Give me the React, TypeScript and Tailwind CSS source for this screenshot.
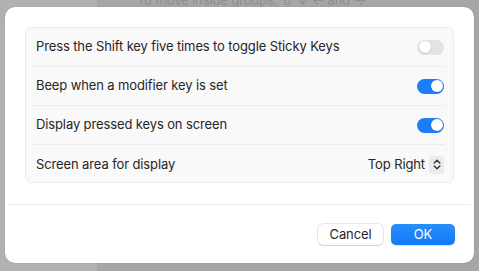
import React from 'react';

function Toggle({ on }: { on: boolean }) {
  return (
    <div
      className={`flex h-[15px] w-[27px] items-center rounded-full p-[1.5px] ${
        on ? 'justify-end bg-[#1a7ef8]' : 'justify-start bg-[#e3e3e3]'
      }`}
    >
      <div className="h-[12px] w-[12px] rounded-full bg-white shadow-[0_0.5px_1px_rgba(0,0,0,0.25)]" />
    </div>
  );
}

function Row({ label, children, last }: { label: string; children: React.ReactNode; last?: boolean }) {
  return (
    <div className="px-[8px]">
      <div className={`flex h-[39px] items-center justify-between pl-[2px] pr-[1px] ${last ? '' : 'border-b border-[#ececec]'}`}>
        <span>{label}</span>
        {children}
      </div>
    </div>
  );
}

export default function App() {
  return (
    <div
      className="relative h-[271px] w-[479px] overflow-hidden bg-[#a6a6a6] text-[13px] tracking-[-0.12px] text-[#262626]"
      style={{ fontFamily: 'Inter, "Noto Sans", sans-serif' }}
    >
      {/* dimmed window behind the sheet */}
      <div className="absolute left-0 top-0 h-full w-[97px] bg-[#b1b1b1]" />
      <div className="absolute left-[137px] top-[-9px] text-[13px] text-[#8e8e8e]">To move inside groups: ⇧ ↓ ← and →</div>

      <div className="relative ml-[5px] mt-[7px] flex h-[256px] w-[469px] flex-col rounded-[10px] bg-white shadow-[0_0_1px_rgba(0,0,0,0.3)]">
        <div className="mx-[20px] mt-[20px] h-[156px] rounded-[6px] border border-[#ececec] bg-[#f9f9f9]">
          <Row label="Press the Shift key five times to toggle Sticky Keys">
            <Toggle on={false} />
          </Row>
          <Row label="Beep when a modifier key is set">
            <Toggle on />
          </Row>
          <Row label="Display pressed keys on screen">
            <Toggle on />
          </Row>
          <Row label="Screen area for display" last>
            <div className="flex items-center gap-[4px]">
              <span>Top Right</span>
              <div className="flex h-[18px] w-[15px] items-center justify-center rounded-[4px] bg-[#ebebeb]">
                <svg width="8" height="11" viewBox="0 0 8 11" fill="none" stroke="#333" strokeWidth="1.4" strokeLinecap="round" strokeLinejoin="round">
                  <path d="M1.2 4 L4 1.3 L6.8 4" />
                  <path d="M1.2 7 L4 9.7 L6.8 7" />
                </svg>
              </div>
            </div>
          </Row>
        </div>

        <div className="mx-[3px] mt-[21px] border-t border-[#ececec]" />

        <div className="mt-auto mb-[18px] mr-[19px] flex justify-end gap-[8px]">
          <button
            type="button"
            className="h-[21px] w-[65px] rounded-[5px] bg-white text-[13px] text-[#262626] shadow-[0_0_0_0.5px_rgba(0,0,0,0.18),0_1px_1px_rgba(0,0,0,0.1)]"
          >
            Cancel
          </button>
          <button
            type="button"
            className="h-[21px] w-[64px] rounded-[5px] bg-gradient-to-b from-[#2a8dfc] to-[#0f7af7] text-[13px] text-white shadow-[0_1px_1px_rgba(0,0,0,0.12)]"
          >
            OK
          </button>
        </div>
      </div>
    </div>
  );
}
